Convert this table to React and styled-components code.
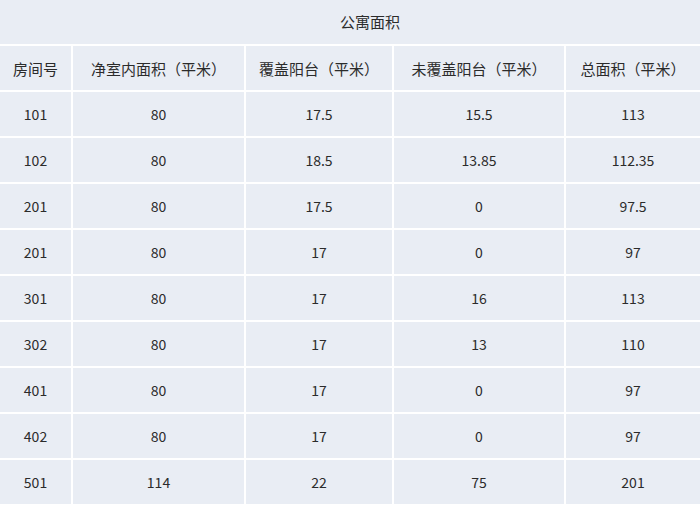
import React from "react";
import styled, { createGlobalStyle } from "styled-components";

const GlobalStyle = createGlobalStyle`
  body {
    margin: 0;
    background: #ffffff;
    font-family: "Noto Sans CJK SC", "Noto Sans", sans-serif;
  }
`;

const columns = [
  "房间号",
  "净室内面积（平米）",
  "覆盖阳台（平米）",
  "未覆盖阳台（平米）",
  "总面积（平米）",
];

const rows = [
  ["101", "80", "17.5", "15.5", "113"],
  ["102", "80", "18.5", "13.85", "112.35"],
  ["201", "80", "17.5", "0", "97.5"],
  ["201", "80", "17", "0", "97"],
  ["301", "80", "17", "16", "113"],
  ["302", "80", "17", "13", "110"],
  ["401", "80", "17", "0", "97"],
  ["402", "80", "17", "0", "97"],
  ["501", "114", "22", "75", "201"],
];

const App = () => {
  return (
    <>
      <GlobalStyle />
      <Table>
        <Title>公寓面积</Title>
        {columns.map((c) => (
          <Cell key={c} head>
            {c}
          </Cell>
        ))}
        {rows.map((r, i) =>
          r.map((v, j) => <Cell key={`${i}-${j}`}>{v}</Cell>)
        )}
      </Table>
    </>
  );
};

export default App;

const Table = styled.div`
  width: 700px;
  display: grid;
  grid-template-columns: 71px 171px 146px 170px 134px;
  grid-auto-rows: 44px;
  gap: 2px;
  background: #ffffff;
  padding-bottom: 2px;
`;

const Cell = styled.div`
  display: flex;
  align-items: center;
  justify-content: center;
  background: #e9edf4;
  color: #2b2b2b;
  font-size: ${(p) => (p.head ? "15px" : "14px")};
  white-space: nowrap;
`;

const Title = styled(Cell)`
  grid-column: 1 / -1;
  padding-left: 40px;
  font-size: 15px;
  padding-bottom: 1px;
`;
